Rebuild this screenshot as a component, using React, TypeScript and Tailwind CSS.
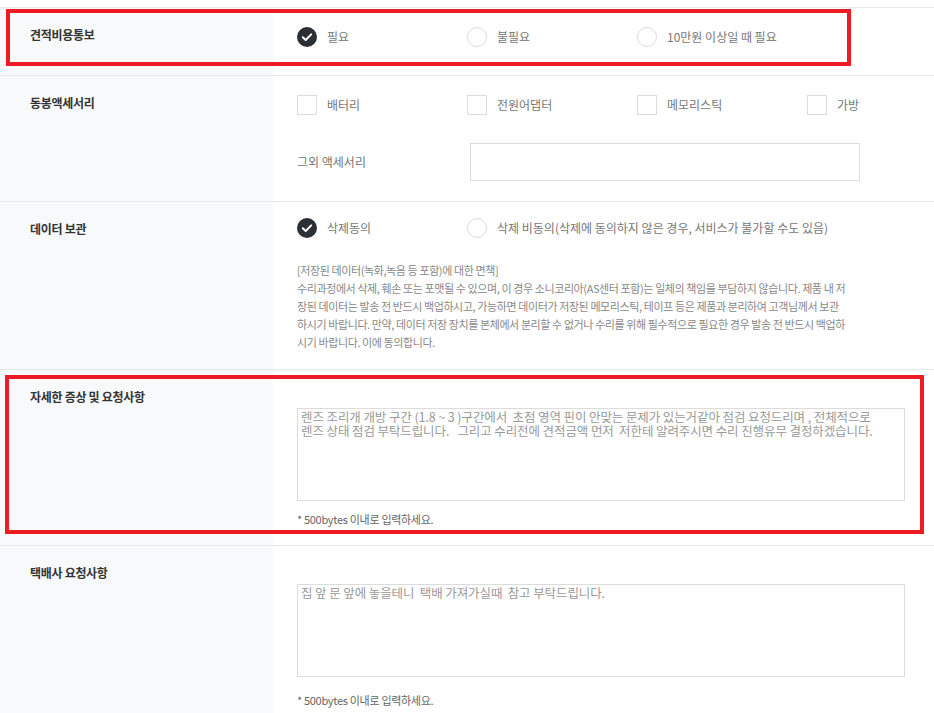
import React from "react";

const FONT = { fontFamily: '"Noto Sans CJK KR", "Noto Sans", sans-serif' };

function RadioOn() {
  return (
    <svg width="20" height="20" viewBox="0 0 20 20" className="shrink-0">
      <circle cx="10" cy="10" r="10" fill="#2b2f36" />
      <path d="M5.8 10.3 L8.7 13 L14.2 7.4" fill="none" stroke="#fff" strokeWidth="2" strokeLinecap="round" strokeLinejoin="round" />
    </svg>
  );
}

function RadioOff() {
  return <div className="w-5 h-5 shrink-0 rounded-full border border-[#dcdcdc] bg-white" />;
}

function Check() {
  return <div className="w-5 h-5 shrink-0 border border-[#dcdcdc] bg-white" />;
}

function Opt({ on, radio, label, w = "w-[170px]" }: { on?: boolean; radio?: boolean; label: string; w?: string }) {
  return (
    <div className={`flex items-center gap-[10px] ${w}`}>
      {radio ? on ? <RadioOn /> : <RadioOff /> : <Check />}
      <span className="text-[12px] leading-5 text-[#777] whitespace-nowrap">{label}</span>
    </div>
  );
}

function Label({ children }: { children: React.ReactNode }) {
  return (
    <div className="w-[273px] shrink-0 bg-[#f8f9fa] pl-[30px] pt-[18px]">
      <div className="text-[12px] leading-[18px] font-bold text-[#333] tracking-[-0.3px]">{children}</div>
    </div>
  );
}

function Note() {
  return <div className="text-[11px] leading-4 text-[#666] tracking-[-0.3px]">* 500bytes 이내로 입력하세요.</div>;
}

export default function App() {
  return (
    <div className="relative w-[934px] h-[713px] overflow-hidden bg-white" style={FONT}>
      <div className="h-[7px]" />
      <div className="border-t border-[#e8e8e8]">
        {/* Row 1 */}
        <div className="flex h-[68px] border-b border-[#e8e8e8]">
          <Label>견적비용통보</Label>
          <div className="flex-1 pl-[24px] pt-[19px]">
            <div className="flex">
              <Opt radio on label="필요" />
              <Opt radio label="불필요" />
              <Opt radio label="10만원 이상일 때 필요" />
            </div>
          </div>
        </div>
        {/* Row 2 */}
        <div className="flex h-[126px] border-b border-[#e8e8e8]">
          <Label>동봉액세서리</Label>
          <div className="flex-1 pl-[24px] pt-[19px]">
            <div className="flex">
              <Opt label="배터리" />
              <Opt label="전원어댑터" />
              <Opt label="메모리스틱" />
              <Opt label="가방" w="w-[100px]" />
            </div>
            <div className="flex items-center mt-[28px]">
              <span className="w-[173px] text-[12px] text-[#777]">그외 액세서리</span>
              <div className="w-[390px] h-[38px] border border-[#dcdcdc] bg-white" />
            </div>
          </div>
        </div>
        {/* Row 3 */}
        <div className="flex h-[168px] border-b border-[#e8e8e8]">
          <Label>데이터 보관</Label>
          <div className="flex-1 pl-[24px] pt-[16px]">
            <div className="flex">
              <Opt radio on label="삭제동의" />
              <Opt radio label="삭제 비동의(삭제에 동의하지 않은 경우, 서비스가 불가할 수도 있음)" w="w-[440px]" />
            </div>
            <div className="mt-[23px] text-[11px] leading-[18px] text-[#888] tracking-[-0.4px] whitespace-nowrap">
              [저장된 데이터(녹화,녹음 등 포함)에 대한 면책]
              <br />
              수리과정에서 삭제, 훼손 또는 포맷될 수 있으며, 이 경우 소니코리아(AS센터 포함)는 일체의 책임을 부담하지 않습니다. 제품 내 저
              <br />
              장된 데이터는 발송 전 반드시 백업하시고, 가능하면 데이터가 저장된 메모리스틱, 테이프 등은 제품과 분리하여 고객님께서 보관
              <br />
              하시기 바랍니다. 만약, 데이터 저장 장치를 본체에서 분리할 수 없거나 수리를 위해 필수적으로 필요한 경우 발송 전 반드시 백업하
              <br />
              시기 바랍니다. 이에 동의합니다.
            </div>
          </div>
        </div>
        {/* Row 4 */}
        <div className="flex h-[176px] border-b border-[#e8e8e8]">
          <Label>자세한 증상 및 요청사항</Label>
          <div className="flex-1 pl-[24px] pt-[38px]">
            <div className="w-[608px] h-[93px] border border-[#dcdcdc] bg-white px-[3px] pt-[1px] text-[12.5px] leading-[14px] text-[#999] tracking-[-0.1px] whitespace-pre">
              {"렌즈 조리개 개방 구간 (1.8 ~ 3 )구간에서  초점 영역 핀이 안맞는 문제가 있는거같아 점검 요청드리며 , 전체적으로\n렌즈 상태 점검 부탁드립니다.   그리고 수리전에 견적금액 먼저  저한테 알려주시면 수리 진행유무 결정하겠습니다."}
            </div>
            <div className="mt-[10px]">
              <Note />
            </div>
          </div>
        </div>
        {/* Row 5 */}
        <div className="flex h-[200px]">
          <Label>택배사 요청사항</Label>
          <div className="flex-1 pl-[24px] pt-[38px]">
            <div className="w-[608px] h-[93px] border border-[#dcdcdc] bg-white px-[3px] pt-[1px] text-[12.5px] leading-[14px] text-[#999] tracking-[-0.1px] whitespace-pre">
              {"집 앞 문 앞에 놓을테니  택배 가져가실때  참고 부탁드립니다."}
            </div>
            <div className="mt-[15px]">
              <Note />
            </div>
          </div>
        </div>
      </div>

      {/* Annotation boxes */}
      <div className="absolute left-[6px] top-[9px] w-[845px] h-[57px] border-4 border-[#ed1c24] pointer-events-none" />
      <div className="absolute left-[5px] top-[375px] w-[919px] h-[159px] border-4 border-[#ed1c24] pointer-events-none" />
    </div>
  );
}
